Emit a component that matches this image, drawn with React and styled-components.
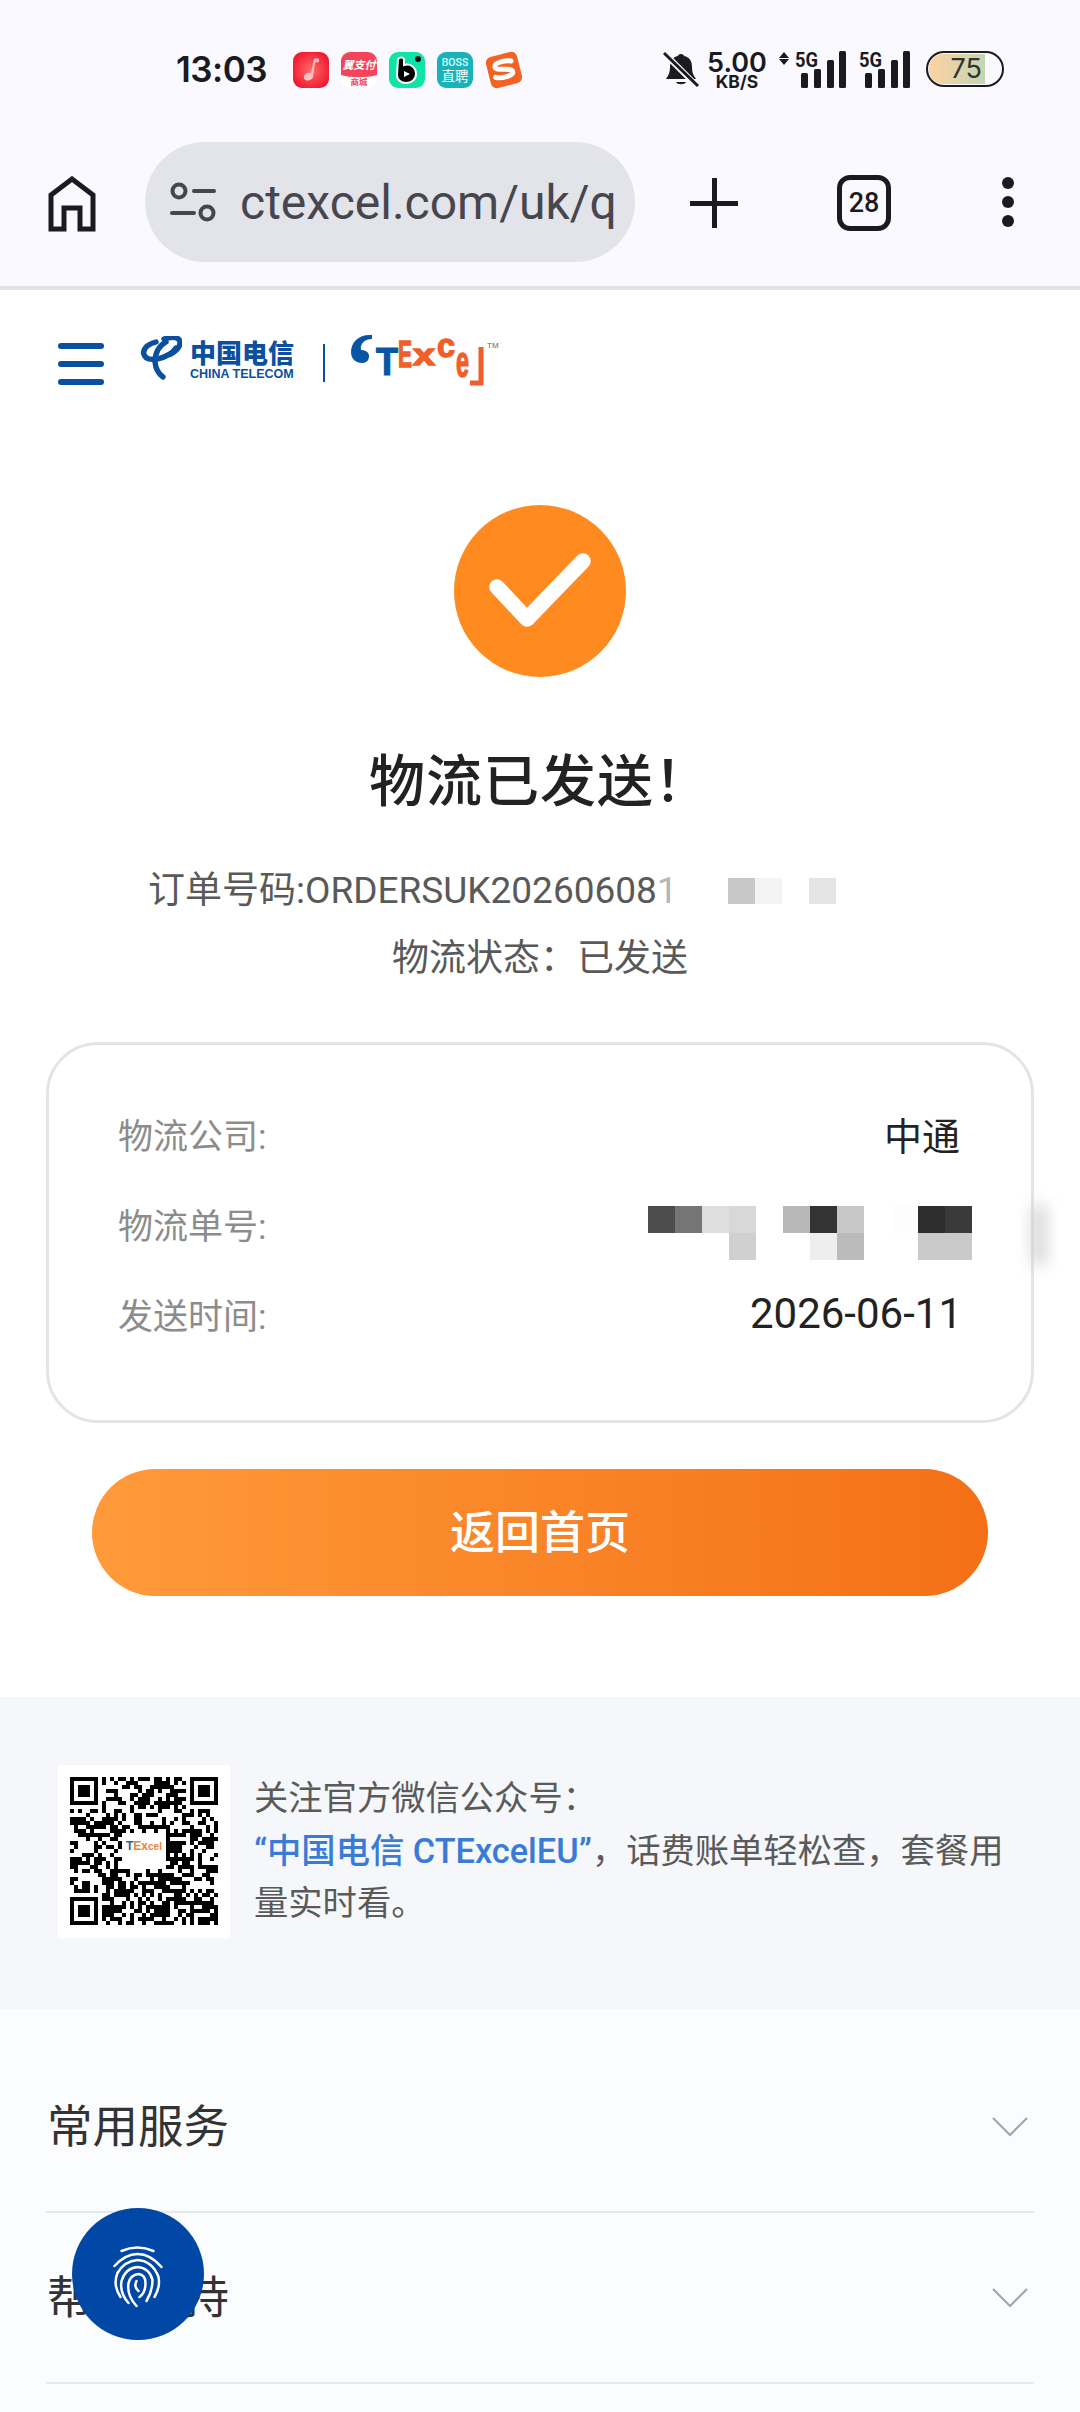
import styled, { createGlobalStyle } from "styled-components"

const CJK = `Roboto, "Noto Sans CJK SC", sans-serif`

const orderMosaic = ["#c8c8c8", "#f4f4f4", "#fff", "#e4e4e4"]
const trackMosaic = [
    "#4d4d4d", "#757575", "#dedede", "#d8d8d8", "#fff", "#b8b8b8", "#333", "#c8c8c8", "#fff", "#fdfdfd", "#2e2e2e", "#3a3a3a",
    "#fff", "#fff", "#fff", "#d0d0d0", "#fff", "#fff", "#eee", "#bbb", "#fff", "#fff", "#cacaca", "#cacaca",
]

// fake but stable QR modules
function qrCells() {
    const size = 37
    const cells = []
    let seed = 71
    const inFinder = (x, y) =>
        (x < 8 && y < 8) || (x > size - 9 && y < 8) || (x < 8 && y > size - 9)
    for (let y = 0; y < size; y++) {
        for (let x = 0; x < size; x++) {
            seed = (seed * 1103515245 + 12345) & 0x7fffffff
            const inLogo = x > 12 && x < 24 && y > 13 && y < 23
            if (!inFinder(x, y) && !inLogo && (seed >> 16) % 100 < 56) cells.push([x, y])
        }
    }
    return cells
}

function Finder({ x, y }) {
    return (
        <g>
            <rect x={x + 0.5} y={y + 0.5} width="6" height="6" fill="none" stroke="#000" />
            <rect x={x + 2} y={y + 2} width="3" height="3" fill="#000" />
        </g>
    )
}

function TelecomMark() {
    return (
        <svg width="42" height="44" viewBox="5 8 42 44" fill="none" stroke="#0a4fa0" strokeWidth="5.4" strokeLinecap="round">
            <path d="M21 14Q9 17 8.5 25Q10 33 22 31Q36 28 41 20" />
            <path d="M29 11Q42 7 45 13Q46 20 36 26" />
            <path d="M31 14Q20 20 20 34Q21 44 28 49" />
        </svg>
    )
}

function ExcelMark() {
    return (
        <svg width="160" height="60" viewBox="0 0 160 60" fontFamily="'Liberation Sans', sans-serif" fontWeight="700">
            <path d="M27 5C14 4 6 12 6 22C6 29 11 33 17 33C22 33 24 30 24 26C24 22 20 20 16 20C15 13 20 9 27 9Z" fill="#0a55a3" />
            <text x="31" y="45" fontSize="38" textLength="22" lengthAdjust="spacingAndGlyphs" fill="#0a55a3" stroke="#0a55a3" strokeWidth="1.2">T</text>
            <g fill="#f05f2a" stroke="#f05f2a" strokeWidth="1.4">
                <text x="53" y="37" fontSize="36" textLength="14" lengthAdjust="spacingAndGlyphs">E</text>
                <text x="68" y="35" fontSize="30" textLength="22" lengthAdjust="spacingAndGlyphs">x</text>
                <text x="92" y="27" fontSize="34" textLength="18" lengthAdjust="spacingAndGlyphs">c</text>
                <text x="111" y="47" fontSize="44" textLength="13" lengthAdjust="spacingAndGlyphs">e</text>
                <path d="M125 53H136V17" fill="none" strokeWidth="5" />
            </g>
            <text x="142" y="18" fontSize="8" fontWeight="400" fill="#666">TM</text>
        </svg>
    )
}

function Home() {
    return (
        <svg width="50" height="56" viewBox="0 0 50 56" fill="none">
            <path d="M4 53V19L25 3L46 19V53H33V32H17V53Z" stroke="#1b1b1f" strokeWidth="5" />
        </svg>
    )
}

function SiteSettings() {
    return (
        <svg width="46" height="40" viewBox="0 0 46 40" fill="none" stroke="#46464f" strokeWidth="4" strokeLinecap="round">
            <circle cx="9" cy="9" r="6.5" />
            <path d="M24 9H44M2 31H24" />
            <circle cx="37" cy="31" r="6.5" />
        </svg>
    )
}

function Bell() {
    return (
        <svg width="38" height="36" viewBox="0 0 38 36">
            <path d="M19 3c2 0 3 1 3 2 6 1 8 6 8 11 0 6 2 9 4 12H4c2-3 4-6 4-12 0-5 2-10 8-11 0-1 1-2 3-2Z" fill="#1b1b1f" />
            <path d="M14 31h10c-1 3-9 3-10 0Z" fill="#1b1b1f" />
            <path d="M2 2L35 35" stroke="#f9f9ff" strokeWidth="6" />
            <path d="M2 2L36 35" stroke="#1b1b1f" strokeWidth="3" />
        </svg>
    )
}

function Signal({ arrows }) {
    return (
        <svg width={arrows ? 68 : 52} height="38" viewBox={arrows ? "-16 0 68 38" : "0 0 52 38"}>
            {arrows && <path d="M-11 1l5 6H-16ZM-11 14l5-6H-16Z" fill="#1b1b1f" />}
            <text x="0" y="16" fontFamily="Roboto, sans-serif" fontWeight="700" fontSize="21" textLength="23" lengthAdjust="spacingAndGlyphs" fill="#1b1b1f">5G</text>
            <rect x="6" y="22" width="7" height="15" rx="1.5" fill="#1b1b1f" />
            <rect x="19" y="18" width="7" height="19" rx="1.5" fill="#1b1b1f" />
            <rect x="32" y="9" width="7" height="28" rx="1.5" fill="#1b1b1f" />
            <rect x="44" y="0" width="7" height="37" rx="1.5" fill="#1b1b1f" />
        </svg>
    )
}

function AppIcons() {
    return (
        <AppRow>
            <svg width="36" height="36" viewBox="0 0 36 36">
                <defs>
                    <radialGradient id="music" cx="50%" cy="50%" r="60%">
                        <stop offset="0" stopColor="#ff6a6a" />
                        <stop offset="1" stopColor="#f0142d" />
                    </radialGradient>
                </defs>
                <rect width="36" height="36" rx="9" fill="url(#music)" />
                <path d="M21 7c2-1 4-1 5 0v3c-2 0-3 0-4 1l-2 14c-1 4-8 5-9 1-1-4 4-6 7-5Z" fill="#ffc2c2" />
            </svg>
            <svg width="36" height="36" viewBox="0 0 36 36">
                <rect width="36" height="36" rx="9" fill="#fff" />
                <path d="M0 9a9 9 0 0 1 9-9h18a9 9 0 0 1 9 9v14c-10 3-26 3-36 0Z" fill="#f5445c" />
                <text x="18" y="17" textAnchor="middle" fontFamily={CJK} fontStyle="italic" fontWeight="700" fontSize="11" fill="#fff">翼支付</text>
                <text x="18" y="33" textAnchor="middle" fontFamily={CJK} fontWeight="700" fontSize="8.5" fill="#f5445c">商城</text>
            </svg>
            <svg width="36" height="36" viewBox="0 0 36 36">
                <rect width="36" height="36" rx="9" fill="#10e3a8" />
                <path d="M9 7c2-2 5-2 6 0v6c6-2 12 2 12 9 0 6-5 9-10 9-5 0-9-3-9-8Z" fill="#000" stroke="#fff" strokeWidth="2" />
                <path d="M15 19l6 3-6 3Z" fill="#fff" />
                <circle cx="29" cy="7" r="3" fill="#111" />
            </svg>
            <svg width="36" height="36" viewBox="0 0 36 36">
                <rect width="36" height="36" rx="9" fill="#17b2ba" />
                <text x="18" y="14" textAnchor="middle" fontFamily="Roboto, sans-serif" fontWeight="500" fontSize="10.5" fill="#dff">BOSS</text>
                <text x="18" y="29" textAnchor="middle" fontFamily={CJK} fontSize="13.5" fill="#fff">直聘</text>
            </svg>
            <svg width="38" height="38" viewBox="0 0 38 38">
                <g transform="rotate(-14 19 19)">
                    <rect x="3" y="3" width="32" height="32" rx="6" fill="#f26322" />
                    <path d="M28 12c-4-2-17-3-17 2 0 5 16 3 16 9 0 4-13 4-18 1" fill="none" stroke="#fff" strokeWidth="5" strokeLinecap="round" />
                </g>
            </svg>
        </AppRow>
    )
}

function Fingerprint() {
    return (
        <svg width="80" height="80" viewBox="-2.5 -1 80 80" fill="none" stroke="#fff" strokeWidth="2.5" strokeLinecap="round">
            <path d="M21 16Q37 9 53 16" />
            <path d="M14 31Q25 19 37 19Q50 19 61 32" />
            <path d="M20 62Q12 50 17 38Q24 26 37 25Q52 26 58 42Q60 52 54 62" />
            <path d="M28 68Q19 58 21 46Q25 33 37 32Q49 33 52 45Q52 56 46 66" />
            <path d="M36 71Q26 60 28 48Q30 40 38 39Q45 40 45 48Q45 58 39 62" />
            <path d="M36 46Q33 52 38 56" />
        </svg>
    )
}

function Chevron() {
    return (
        <svg width="36" height="20" viewBox="0 0 36 20" fill="none">
            <path d="M1 1L18 18L35 1" stroke="#a3a6a8" strokeWidth="2.2" />
        </svg>
    )
}

export default function App() {
    return (
        <Page>
            <Global />
            <BrowserChrome>
                <StatusBar>
                    <Time>13:03</Time>
                    <AppIcons />
                    <StatusRight>
                        <Bell />
                        <Speed>
                            <b>5.00</b>
                            <span>KB/S</span>
                        </Speed>
                        <Signal arrows />
                        <Signal />
                        <Battery>
                            <BatteryFill>75</BatteryFill>
                        </Battery>
                    </StatusRight>
                </StatusBar>
                <Toolbar>
                    <HomeButton><Home /></HomeButton>
                    <UrlPill>
                        <SiteSettings />
                        <Url>ctexcel.com/uk/q</Url>
                    </UrlPill>
                    <Plus />
                    <TabCount>28</TabCount>
                    <Dots><i /><i /><i /></Dots>
                </Toolbar>
            </BrowserChrome>

            <SiteHeader>
                <Burger><i /><i /><i /></Burger>
                <TelecomLogo>
                    <TelecomMark />
                    <TelecomName>
                        <strong>中国电信</strong>
                        <span>CHINA TELECOM</span>
                    </TelecomName>
                </TelecomLogo>
                <LogoDivider />
                <ExcelLogo><ExcelMark /></ExcelLogo>
            </SiteHeader>

            <Main>
                <Result>
                    <CheckCircle>
                        <svg width="104" height="78" viewBox="0 0 104 78" fill="none">
                            <path d="M9 35L39 67L95 9" stroke="#fff" strokeWidth="15.5" strokeLinecap="round" strokeLinejoin="round" />
                        </svg>
                    </CheckCircle>
                    <Title>物流已发送！</Title>
                    <OrderLine>
                        订单号码:ORDERSUK20260608<Faded>1</Faded>
                        <OrderMosaic>
                            {orderMosaic.map((c, i) => <Pixel key={i} $color={c} />)}
                        </OrderMosaic>
                    </OrderLine>
                    <StatusLine>物流状态：已发送</StatusLine>
                </Result>

                <Card>
                    <Row>
                        <Label>物流公司:</Label>
                        <Value>中通</Value>
                    </Row>
                    <Row>
                        <Label>物流单号:</Label>
                        <TrackMosaic>
                            {trackMosaic.map((c, i) => <Pixel key={i} $color={c} />)}
                        </TrackMosaic>
                    </Row>
                    <Row>
                        <Label>发送时间:</Label>
                        <Value $latin>2026-06-11</Value>
                    </Row>
                    <Smudge />
                </Card>

                <BackButton>返回首页</BackButton>
            </Main>

            <Follow>
                <QrBox>
                    <svg width="148" height="148" viewBox="0 0 37 37" shapeRendering="crispEdges">
                        {qrCells().map(([x, y]) => <rect key={x + "-" + y} x={x} y={y} width="1" height="1" fill="#000" />)}
                        <Finder x={0} y={0} />
                        <Finder x={30} y={0} />
                        <Finder x={0} y={30} />
                    </svg>
                    <QrLogo><b>T</b>Ex<em>cel</em></QrLogo>
                </QrBox>
                <FollowText>
                    关注官方微信公众号：<br />
                    <Blue>“中国电信 CTExcelEU”</Blue>，话费账单轻松查，套餐用量实时看。
                </FollowText>
            </Follow>

            <Accordion>
                <AccordionRow>
                    <span>常用服务</span>
                    <Chevron />
                </AccordionRow>
                <AccordionRow>
                    <span>帮助支持</span>
                    <Chevron />
                </AccordionRow>
            </Accordion>

            <Fab><Fingerprint /></Fab>
        </Page>
    )
}

const Global = createGlobalStyle`
    html, body {
        margin: 0;
        padding: 0;
        background: #fff;
    }
    * {
        box-sizing: border-box;
    }
`

const Page = styled.div`
    width: 1080px;
    height: 2412px;
    overflow: hidden;
    position: relative;
    font-family: ${CJK};
    background: #fbfcfe;
`

const BrowserChrome = styled.div`
    height: 290px;
    background: #f9f9ff;
    border-bottom: 4px solid #e2e2e8;
`

const StatusBar = styled.div`
    height: 142px;
    padding: 50px 76px 0 176px;
    display: flex;
    align-items: flex-start;
`

const Time = styled.div`
    font-family: Inter, sans-serif;
    font-size: 35px;
    font-weight: 600;
    line-height: 38px;
    letter-spacing: -0.5px;
    color: #1b1b1f;
    width: 117px;
`

const AppRow = styled.div`
    display: flex;
    align-items: center;
    gap: 12px;
    height: 38px;
    margin-top: 1px;
`

const StatusRight = styled.div`
    margin-left: auto;
    padding-top: 1px;
    display: flex;
    align-items: flex-start;
    gap: 11px;

    & > svg:first-child {
        margin-right: -5px;
    }
    & > svg:nth-of-type(3) {
        margin-left: 1px;
    }
`

const Speed = styled.div`
    width: 62px;
    display: flex;
    flex-direction: column;
    align-items: center;
    font-family: Inter, sans-serif;
    color: #1b1b1f;

    b {
        font-size: 27px;
        font-weight: 600;
        line-height: 23px;
    }
    span {
        font-size: 17.5px;
        font-weight: 700;
        line-height: 15px;
    }
`

const Battery = styled.div`
    width: 78px;
    height: 36px;
    margin-left: 4px;
    border: 2.5px solid #1b1b1f;
    border-radius: 18px;
    padding: 1px;
    overflow: hidden;
`

const BatteryFill = styled.div`
    width: 56px;
    height: 100%;
    border-radius: 14px 0 0 14px;
    background: linear-gradient(90deg, #ffd2a0, #c2d6b2);
    font-family: Inter, sans-serif;
    font-size: 27px;
    line-height: 29px;
    text-align: right;
    padding-right: 3px;
    color: #333;
`

const Toolbar = styled.div`
    height: 144px;
    padding-left: 47px;
    display: flex;
    align-items: flex-start;
`

const HomeButton = styled.div`
    height: 56px;
    margin-top: 34px;
`

const UrlPill = styled.div`
    width: 490px;
    height: 120px;
    margin-left: 48px;
    border-radius: 60px;
    background: #e3e3ea;
    padding: 0 18px 0 25px;
    display: flex;
    align-items: center;
    gap: 24px;
    overflow: hidden;
`

const Url = styled.div`
    flex: 1;
    min-width: 0;
    white-space: nowrap;
    font-size: 48px;
    color: #46464f;
`

const Plus = styled.div`
    width: 48px;
    height: 50px;
    margin: 36px 0 0 55px;
    background:
        linear-gradient(#1b1b1f, #1b1b1f) center / 48px 5px no-repeat,
        linear-gradient(#1b1b1f, #1b1b1f) center / 5px 50px no-repeat;
    border-radius: 3px;
`

const TabCount = styled.div`
    width: 54px;
    height: 56px;
    margin: 33px 0 0 99px;
    border: 5px solid #1b1b1f;
    border-radius: 13px;
    display: flex;
    align-items: center;
    justify-content: center;
    font-size: 27px;
    font-weight: 500;
    color: #1b1b1f;
`

const Dots = styled.div`
    width: 12px;
    margin: 35px 0 0 111px;
    display: flex;
    flex-direction: column;
    gap: 7px;

    i {
        width: 12px;
        height: 12px;
        border-radius: 50%;
        background: #1b1b1f;
    }
`

const SiteHeader = styled.div`
    height: 100px;
    background: #fff;
    padding: 46px 0 0 58px;
    display: flex;
    align-items: flex-start;
`

const Burger = styled.div`
    width: 46px;
    margin-top: 7px;
    display: flex;
    flex-direction: column;
    gap: 12px;

    i {
        height: 6px;
        border-radius: 3px;
        background: #0a4fa0;
    }
`

const TelecomLogo = styled.div`
    margin-left: 36px;
    display: flex;
    gap: 8px;
`

const TelecomName = styled.div`
    width: 104px;
    color: #0a4fa0;
    margin-top: -1px;

    strong {
        display: block;
        font-family: "Noto Sans CJK SC", sans-serif;
        font-size: 26px;
        line-height: 33px;
        font-weight: 900;
    }
    span {
        display: block;
        font-family: "Liberation Sans", sans-serif;
        font-size: 12.5px;
        line-height: 12px;
        font-weight: 700;
        white-space: nowrap;
    }
`

const LogoDivider = styled.div`
    width: 2px;
    height: 38px;
    margin: 8px 0 0 29px;
    background: #0a4fa0;
`

const ExcelLogo = styled.div`
    margin: -6px 0 0 20px;
    height: 60px;
`

const Main = styled.div`
    background: #fff;
    padding-bottom: 101px;
`

const Result = styled.div`
    height: 652px;
    padding-top: 115px;
    display: flex;
    flex-direction: column;
    align-items: center;
`

const CheckCircle = styled.div`
    width: 172px;
    height: 172px;
    border-radius: 50%;
    background: #ff8a1f;
    display: flex;
    align-items: center;
    justify-content: center;
`

const Title = styled.div`
    margin-top: 64px;
    font-family: "Noto Sans CJK SC", sans-serif;
    font-size: 56px;
    line-height: 72px;
    font-weight: 500;
    color: #222;
    letter-spacing: 1px;
`

const OrderLine = styled.div`
    margin-top: 44px;
    font-size: 37px;
    line-height: 68px;
    color: #595959;
    display: flex;
    align-items: center;
    width: 784px;
    white-space: nowrap;
`

const Faded = styled.span`
    color: #b5b5b5;
`

const Pixel = styled.div`
    background: ${p => p.$color};
`

const OrderMosaic = styled.div`
    margin-left: 50px;
    display: grid;
    grid-template-columns: repeat(4, 27px);
    grid-auto-rows: 26px;
`

const StatusLine = styled(OrderLine)`
    margin-top: 0;
    width: auto;
`

const Card = styled.div`
    position: relative;
    width: 988px;
    height: 381px;
    margin: 0 auto;
    background: #fff;
    border: 3px solid #e4e4e4;
    border-radius: 52px;
    padding: 43px 71px 0 69px;
`

const Row = styled.div`
    height: 90px;
    display: flex;
    align-items: center;
    justify-content: space-between;
`

const Label = styled.div`
    font-size: 35px;
    color: #8c8c8c;
`

const Value = styled.div`
    font-size: ${p => (p.$latin ? 42 : 38)}px;
    margin-right: ${p => (p.$latin ? -2 : 0)}px;
    color: #222;
`

const TrackMosaic = styled.div`
    margin: 20px -12px 0 0;
    display: grid;
    grid-template-columns: repeat(12, 27px);
    grid-auto-rows: 27px;
`

const Smudge = styled.div`
    position: absolute;
    right: -14px;
    top: 160px;
    width: 12px;
    height: 60px;
    background: #ccc;
    filter: blur(8px);
`

const BackButton = styled.div`
    width: 896px;
    height: 127px;
    margin: 46px auto 0;
    padding-bottom: 6px;
    border-radius: 64px;
    background: linear-gradient(90deg, #ff9a3a, #f47016);
    display: flex;
    align-items: center;
    justify-content: center;
    font-size: 45px;
    font-weight: 500;
    color: #fff;
`

const Follow = styled.div`
    height: 312px;
    background: #f5f7fa;
    padding: 68px 40px 0 58px;
    display: flex;
    gap: 24px;
`

const QrBox = styled.div`
    position: relative;
    flex: none;
    width: 172px;
    height: 173px;
    background: #fff;
    padding: 12px;
`

const QrLogo = styled.div`
    position: absolute;
    left: 68px;
    top: 74px;
    font-family: "Liberation Sans", sans-serif;
    font-size: 12px;
    font-weight: 700;
    color: #e9833a;

    b {
        color: #1f5fa8;
    }
    em {
        font-style: normal;
        font-size: 10px;
    }
`

const FollowText = styled.div`
    width: 770px;
    font-size: 34.3px;
    line-height: 52.5px;
    color: #5a5a5a;
    margin-top: 7px;
`

const Blue = styled.span`
    font-weight: 500;
    color: #3a7bd5;
`

const Accordion = styled.div`
    padding: 33px 46px 0;
`

const AccordionRow = styled.div`
    height: 171px;
    border-bottom: 2px solid #e6e8eb;
    padding: 0 6px 8px 1px;
    display: flex;
    align-items: center;
    justify-content: space-between;
    font-size: 45.5px;
    color: #333;

    svg {
        margin-top: 8px;
    }
`

const Fab = styled.div`
    position: absolute;
    left: 72px;
    top: 2208px;
    width: 132px;
    height: 132px;
    border-radius: 50%;
    background: #0047a6;
    display: flex;
    align-items: center;
    justify-content: center;
`
